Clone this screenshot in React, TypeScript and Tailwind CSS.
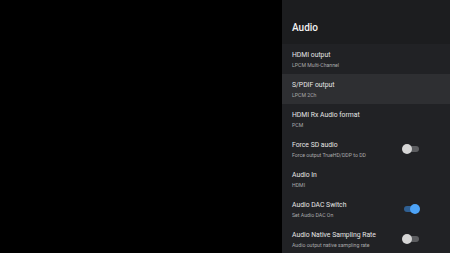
import React from "react";

type Row = { title: string; sub: string; toggle?: boolean; on?: boolean; selected?: boolean };

const rows: Row[] = [
  { title: "HDMI output", sub: "LPCM Multi-Channel" },
  { title: "S/PDIF output", sub: "LPCM 2Ch", selected: true },
  { title: "HDMI Rx Audio format", sub: "PCM" },
  { title: "Force SD audio", sub: "Force output TrueHD/DDP to DD", toggle: true, on: false },
  { title: "Audio In", sub: "HDMI" },
  { title: "Audio DAC Switch", sub: "Set Audio DAC On", toggle: true, on: true },
  { title: "Audio Native Sampling Rate", sub: "Audio output native sampling rate", toggle: true, on: false },
];

function Toggle({ on }: { on: boolean }) {
  return (
    <div className="relative w-[18px] h-[10px] flex items-center">
      <div className={`w-[15px] h-[6px] rounded-full ml-[2px] ${on ? "bg-[#2f5f92]" : "bg-[#5c5d60]"}`} />
      <div
        className={`absolute top-0 w-[10px] h-[10px] rounded-full ${on ? "right-0 bg-[#4da3f7]" : "left-0 bg-[#d6d6d6]"}`}
      />
    </div>
  );
}

export default function App() {
  return (
    <div className="w-[450px] h-[253px] bg-black flex overflow-hidden" style={{ fontFamily: "Roboto, 'Noto Sans', sans-serif" }}>
      <div className="w-[282px] shrink-0 bg-black" />
      <div className="flex-1 flex flex-col bg-[#1c1d1f]">
        <div className="h-[44px] shrink-0 flex items-center pl-[10px] pt-[11px]">
          <span className="text-[10px] font-medium text-[#f2f2f2] leading-none">Audio</span>
        </div>
        <div className="flex-1 flex flex-col bg-[#212225]">
          {rows.map((r) => (
            <div
              key={r.title}
              className={`h-[30px] shrink-0 flex items-center justify-between pl-[10px] pr-[30px] ${r.selected ? "bg-[#2e2f32]" : ""}`}
            >
              <div className="flex flex-col pt-[1px]">
                <span className="text-[6.8px] leading-[9px] text-[#e6e6e6]">{r.title}</span>
                <span className="text-[5.2px] leading-[8px] text-[#a9a9ab] mt-[1px]">{r.sub}</span>
              </div>
              {r.toggle && <Toggle on={!!r.on} />}
            </div>
          ))}
        </div>
      </div>
    </div>
  );
}
